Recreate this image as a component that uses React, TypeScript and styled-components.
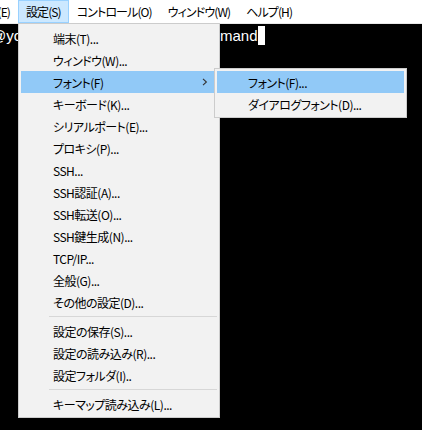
import React from "react"
import styled, { createGlobalStyle } from "styled-components"

const GlobalStyle = createGlobalStyle`
    html, body {
        margin: 0;
        padding: 0;
        background: #000;
        overflow: hidden;
    }
    body {
        font-family: "Noto Sans CJK JP", "Noto Sans", sans-serif;
        font-size: 12px;
        font-feature-settings: "palt";
    }
`

type Entry = { label: string; sub?: string[]; active?: boolean } | "sep"

const entries: Entry[] = [
    { label: "端末(T)..." },
    { label: "ウィンドウ(W)..." },
    { label: "フォント(F)", active: true, sub: ["フォント(F)...", "ダイアログフォント(D)..."] },
    { label: "キーボード(K)..." },
    { label: "シリアルポート(E)..." },
    { label: "プロキシ(P)..." },
    { label: "SSH..." },
    { label: "SSH認証(A)..." },
    { label: "SSH転送(O)..." },
    { label: "SSH鍵生成(N)..." },
    { label: "TCP/IP..." },
    { label: "全般(G)..." },
    { label: "その他の設定(D)..." },
    "sep",
    { label: "設定の保存(S)..." },
    { label: "設定の読み込み(R)..." },
    { label: "設定フォルダ(I).." },
    "sep",
    { label: "キーマップ読み込み(L)..." },
]

export default function App() {
    return (
        <Screen>
            <GlobalStyle />
            <MenuBar>
                <ClippedItem>編集(E)</ClippedItem>
                <BarItem $open>
                    設定(S)
                    <Dropdown>
                        {entries.map((e, i) =>
                            e === "sep" ? (
                                <Separator key={i} />
                            ) : (
                                <Item key={i} $active={e.active}>
                                    {e.label}
                                    {e.sub && (
                                        <>
                                            <Chevron width="6" height="8" viewBox="0 0 6 8">
                                                <path d="M1 0.8 L4.4 4 L1 7.2" fill="none" stroke="#333" strokeWidth="1.1" />
                                            </Chevron>
                                            <SubMenu>
                                                {e.sub.map((s, j) => (
                                                    <SubItem key={s} $active={j === 0}>{s}</SubItem>
                                                ))}
                                            </SubMenu>
                                        </>
                                    )}
                                </Item>
                            )
                        )}
                    </Dropdown>
                </BarItem>
                <BarItem>コントロール(O)</BarItem>
                <BarItem>ウィンドウ(W)</BarItem>
                <BarItem>ヘルプ(H)</BarItem>
            </MenuBar>
            <Terminal>
                <TermLine>
                    <Prompt>@yourhost:~$ type a com</Prompt>
                    <span>mand</span>
                    <Cursor />
                </TermLine>
            </Terminal>
        </Screen>
    )
}

const Screen = styled.div`
    width: 422px;
    height: 430px;
    display: flex;
    flex-direction: column;
    background: #000;
`

const MenuBar = styled.div`
    display: flex;
    height: 23px;
    background: #fff;
    border-bottom: 1px solid #e9e9e9;
    color: #000;
`

const BarItem = styled.div<{ $open?: boolean }>`
    position: relative;
    display: flex;
    align-items: center;
    box-sizing: border-box;
    height: 23px;
    padding: 0 7px;
    white-space: nowrap;
    letter-spacing: -0.9px;
    background: ${p => (p.$open ? "#cce8ff" : "transparent")};
    border: 1px solid ${p => (p.$open ? "#99d1ff" : "transparent")};
`

const ClippedItem = styled.div`
    display: flex;
    align-items: center;
    justify-content: flex-end;
    flex: none;
    width: 18px;
    height: 23px;
    padding-right: 8px;
    box-sizing: border-box;
    overflow: hidden;
    white-space: nowrap;
    letter-spacing: -0.9px;
`

const Dropdown = styled.div`
    position: absolute;
    left: -1px;
    top: 22px;
    width: 202px;
    box-sizing: border-box;
    padding: 3px 2px 2px 2px;
    background: #f2f2f2;
    border: 1px solid #cccccc;
    letter-spacing: -0.5px;
    z-index: 10;
`

const Item = styled.div<{ $active?: boolean }>`
    position: relative;
    display: flex;
    align-items: center;
    height: 22px;
    padding-left: 32px;
    background: ${p => (p.$active ? "#91c9f7" : "transparent")};
    white-space: nowrap;
`

const Chevron = styled.svg`
    position: absolute;
    left: 181px;
    top: 7px;
`

const Separator = styled.div`
    height: 1px;
    margin: 3px 0 3px 28px;
    background: #d7d7d7;
`

const SubMenu = styled.div`
    position: absolute;
    left: 193px;
    top: -3px;
    width: 193px;
    box-sizing: border-box;
    padding: 2px;
    background: #f2f2f2;
    border: 1px solid #cccccc;
    z-index: 11;
`

const SubItem = styled.div<{ $active?: boolean }>`
    display: flex;
    align-items: center;
    height: 22px;
    padding-left: 31px;
    background: ${p => (p.$active ? "#91c9f7" : "transparent")};
    white-space: nowrap;
`

const Terminal = styled.div`
    flex: 1;
    background: #000;
    color: #fff;
    font-family: "Liberation Sans", Arial, sans-serif;
    font-size: 15px;
    font-feature-settings: normal;
`

const TermLine = styled.div`
    display: flex;
    align-items: center;
    height: 20px;
    margin-top: 1px;
`

const Prompt = styled.span`
    display: block;
    flex: none;
    width: 229px;
    margin-left: -9px;
    overflow: hidden;
    white-space: nowrap;
`

const Cursor = styled.span`
    display: block;
    width: 7px;
    height: 19px;
    background: #fff;
`
